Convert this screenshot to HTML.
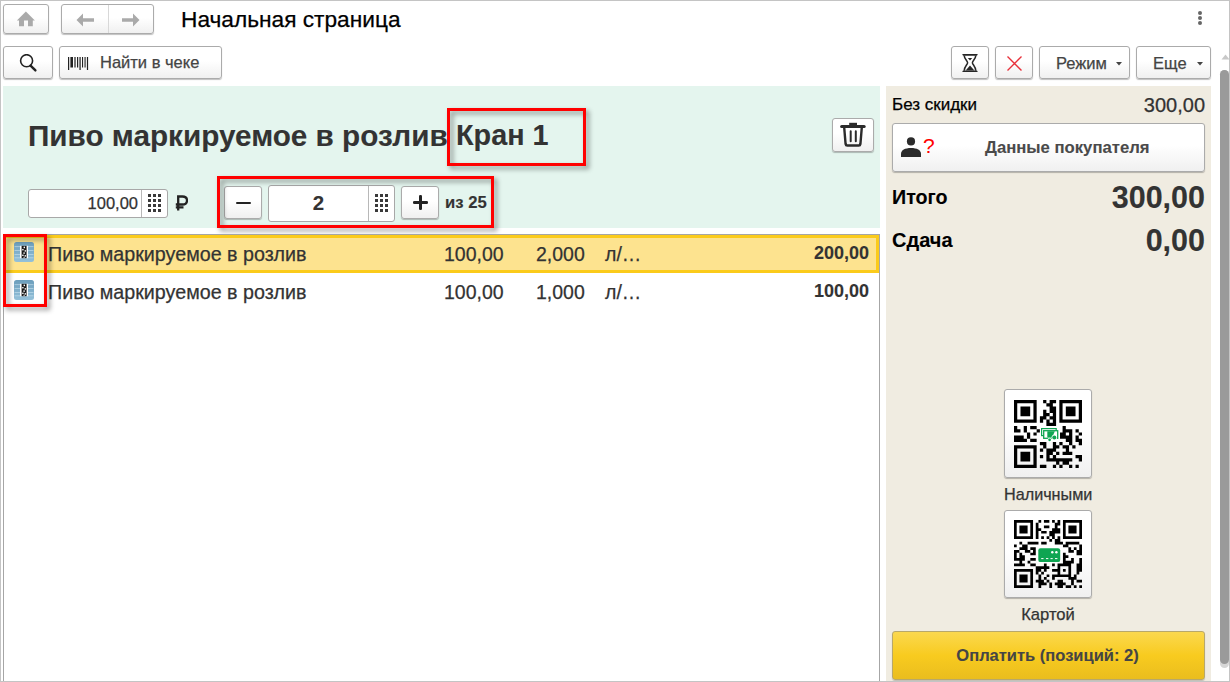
<!DOCTYPE html>
<html><head><meta charset="utf-8">
<style>
*{box-sizing:border-box;margin:0;padding:0}
html,body{width:1230px;height:682px;overflow:hidden;background:#fff;font-family:"Liberation Sans",sans-serif;color:#333}
.a{position:absolute}
.btn{position:absolute;border:1px solid #ababab;border-radius:3px;background:linear-gradient(#fff 0%,#fff 45%,#f0f0f0 100%);box-shadow:0 1px 1px rgba(0,0,0,.25)}
.t{position:absolute;white-space:nowrap;line-height:1;-webkit-text-stroke:0.25px currentColor}
.t[style*="bold"]{-webkit-text-stroke:0.1px currentColor}
.red{position:absolute;border:3px solid #f00;filter:drop-shadow(3px 3px 2.5px rgba(0,0,0,.42))}
.fld{position:absolute;border:1px solid #a8a8a8;border-radius:3px;background:#fff}
.kp{position:absolute;width:13px;height:18px;background-image:radial-gradient(#3a3a3a 0,#3a3a3a 0);}
</style></head><body>
<!-- window border -->
<div class="a" style="left:0;top:0;width:1230px;height:682px;border:1px solid #c4c4c4;z-index:10"></div>

<!-- top toolbar -->
<div class="btn" style="left:3px;top:4px;width:46px;height:30px">
  <svg class="a" style="left:0;top:0" width="44" height="28" viewBox="0 0 44 28"><path d="M12.9 15.4 L21.9 6.6 L30.9 15.4 Z" fill="#aaa"/><path d="M15 15 H20 V21.2 H15 Z M24 15 H28.8 V21.2 H24 Z" fill="#aaa"/></svg>
</div>
<div class="btn" style="left:61px;top:4px;width:93px;height:30px">
  <div class="a" style="left:46px;top:0;width:1px;height:28px;background:#d8d8d8"></div>
  <svg class="a" style="left:14px;top:8px" width="19" height="14" viewBox="0 0 19 14"><path d="M0.5 7 L7 0.5 V5.3 H18 V8.7 H7 V13.5 Z" fill="#aaa"/></svg>
  <svg class="a" style="left:59px;top:8px" width="19" height="14" viewBox="0 0 19 14"><path d="M18.5 7 L12 0.5 V5.3 H1 V8.7 H12 V13.5 Z" fill="#aaa"/></svg>
</div>
<div class="t" style="left:181px;top:8px;font-size:22.7px;color:#000">Начальная страница</div>
<div class="a" style="left:1198px;top:11px;width:4px;height:4px;border-radius:2px;background:#666"></div>
<div class="a" style="left:1198px;top:16px;width:4px;height:4px;border-radius:2px;background:#666"></div>
<div class="a" style="left:1198px;top:21px;width:4px;height:4px;border-radius:2px;background:#666"></div>

<!-- second toolbar -->
<div class="btn" style="left:3px;top:46px;width:50px;height:33px">
  <svg class="a" style="left:15px;top:7px" width="20" height="20" viewBox="0 0 20 20"><circle cx="7.6" cy="6.7" r="6" fill="none" stroke="#222" stroke-width="1.6"/><path d="M11.6 11.6 L16.4 16.4" stroke="#222" stroke-width="2.4" stroke-linecap="round"/></svg>
</div>
<div class="btn" style="left:59px;top:46px;width:163px;height:33px">
  <svg class="a" style="left:7px;top:9px" width="22" height="15" viewBox="0 0 22 15"><g fill="#222"><rect x="1" y="1" width="1.2" height="13"/><rect x="3.4" y="1" width="2.6" height="10.5"/><rect x="7" y="1" width="2" height="10.5" fill="#777"/><rect x="10" y="1" width="1.2" height="10.5"/><rect x="12.2" y="1" width="1.8" height="13" fill="#666"/><rect x="15" y="1" width="1.1" height="10.5"/><rect x="17.2" y="1" width="1.8" height="10.5" fill="#777"/><rect x="19.9" y="1" width="1.2" height="13"/></g></svg>
  <div class="t" style="left:40px;top:7px;font-size:16.5px;color:#444">Найти в чеке</div>
</div>
<div class="btn" style="left:951px;top:46px;width:38px;height:33px">
  <svg class="a" style="left:10px;top:7px" width="17" height="19" viewBox="0 0 17 19"><path d="M0.2 0 H15.8 L15 1.8 H1 Z M1 16.4 H15 L15.8 18.1 H0.2 Z" fill="#262626"/><path d="M2.2 1.6 C2.4 5 5.6 7 5.6 8.7 C5.6 10.4 2.4 12.4 2.2 16.6 M13.8 1.6 C13.6 5 10.4 7 10.4 8.7 C10.4 10.4 13.6 12.4 13.8 16.6" fill="none" stroke="#262626" stroke-width="1.5"/><path d="M5.8 3.9 H10.2 L8 6.4 Z" fill="#262626"/><path d="M3.6 16.6 L8 11.4 L12.4 16.6 Z" fill="#262626"/></svg>
</div>
<div class="btn" style="left:995px;top:46px;width:38px;height:33px">
  <svg class="a" style="left:10px;top:8px" width="17" height="17" viewBox="0 0 17 17"><path d="M1.5 1.5 L15.5 15.5 M15.5 1.5 L1.5 15.5" stroke="#e8303a" stroke-width="1.4"/></svg>
</div>
<div class="btn" style="left:1039px;top:46px;width:91px;height:33px">
  <div class="t" style="left:16px;top:8px;font-size:16.5px;color:#444">Режим</div>
  <svg class="a" style="left:76px;top:15px" width="6" height="4" viewBox="0 0 6 4"><path d="M0 0 H6 L3 3.5 Z" fill="#444"/></svg>
</div>
<div class="btn" style="left:1136px;top:46px;width:75px;height:33px">
  <div class="t" style="left:16px;top:8px;font-size:16.5px;color:#444">Еще</div>
  <svg class="a" style="left:60px;top:15px" width="6" height="4" viewBox="0 0 6 4"><path d="M0 0 H6 L3 3.5 Z" fill="#444"/></svg>
</div>

<!-- scrollbar -->
<svg class="a" style="left:1221px;top:54px" width="9" height="6" viewBox="0 0 9 6"><path d="M0.5 5.5 L4.5 0.5 L8.5 5.5 Z" fill="#c8c8c8"/></svg>
<div class="a" style="left:1220px;top:70px;width:9px;height:598px;border-radius:5px;background:#d6d6d6"></div>
<div class="a" style="left:1220px;top:70px;width:9px;height:594px;border-radius:5px;background:#9a9a9a"></div>

<!-- green header -->
<div class="a" style="left:3px;top:86px;width:877px;height:142px;background:#e4f5ee"></div>
<div class="t" style="left:28px;top:121px;font-size:29.7px;font-weight:bold;color:#333">Пиво маркируемое в розлив</div>
<div class="t" id="kran" style="left:456px;top:121px;font-size:28.8px;font-weight:bold;color:#333">Кран 1</div>
<div class="btn" style="left:832px;top:118px;width:42px;height:34px">
  <svg class="a" style="left:0;top:0" width="40" height="32" viewBox="0 0 40 32"><path d="M16.2 5 H24" stroke="#2b2b2b" stroke-width="2.4"/><path d="M8.6 7.6 H31.2" stroke="#2b2b2b" stroke-width="3" stroke-linecap="round"/><path d="M11.2 8.5 L12.6 25 Q12.8 26.5 14.3 26.5 H25.7 Q27.2 26.5 27.4 25 L28.8 8.5" fill="none" stroke="#2b2b2b" stroke-width="2.4"/><path d="M17.7 12.2 V22.3 M22.8 12.2 V22.3" stroke="#2b2b2b" stroke-width="2" stroke-linecap="round"/></svg>
</div>

<!-- price field -->
<div class="fld" style="left:28px;top:189px;width:140px;height:29px">
  <div class="a" style="left:112px;top:0;width:1px;height:27px;background:#b8b8b8"></div>
  <div class="t" style="left:0;top:5px;width:109px;text-align:right;font-size:16.5px;color:#333">100,00</div>
  <svg class="a" style="left:119px;top:4px" width="14" height="19" viewBox="0 0 14 19"><g fill="#3a3a3a"><rect x="0" y="0" width="3" height="3"/><rect x="5" y="0" width="3" height="3"/><rect x="10" y="0" width="3" height="3"/><rect x="0" y="5" width="3" height="3"/><rect x="5" y="5" width="3" height="3"/><rect x="10" y="5" width="3" height="3"/><rect x="0" y="10" width="3" height="3"/><rect x="5" y="10" width="3" height="3"/><rect x="10" y="10" width="3" height="3"/><rect x="0" y="15" width="3" height="3"/><rect x="5" y="15" width="3" height="3"/><rect x="10" y="15" width="3" height="3"/></g></svg>
</div>
<svg class="a" style="left:175px;top:195px" width="13" height="16" viewBox="0 0 13 16"><path d="M3.2 15.5 V1.5 H7.5 C10.5 1.5 12 3.2 12 5.5 C12 7.8 10.5 9.5 7.5 9.5 H0.8 M0.8 12.3 H8.5" fill="none" stroke="#222" stroke-width="2.3"/></svg>

<!-- quantity -->
<div class="btn" style="left:224px;top:186px;width:38px;height:33px">
  <div class="a" style="left:11px;top:14.6px;width:15px;height:2.6px;border-radius:1.3px;background:#222"></div>
</div>
<div class="fld" style="left:268px;top:185px;width:127px;height:37px">
  <div class="a" style="left:99px;top:0;width:1px;height:35px;background:#b8b8b8"></div>
  <div class="t" style="left:0;top:7px;width:99px;text-align:center;font-size:20.5px;font-weight:bold;color:#333">2</div>
  <svg class="a" style="left:106px;top:8px" width="14" height="19" viewBox="0 0 14 19"><g fill="#3a3a3a"><rect x="0" y="0" width="3" height="3"/><rect x="5" y="0" width="3" height="3"/><rect x="10" y="0" width="3" height="3"/><rect x="0" y="5" width="3" height="3"/><rect x="5" y="5" width="3" height="3"/><rect x="10" y="5" width="3" height="3"/><rect x="0" y="10" width="3" height="3"/><rect x="5" y="10" width="3" height="3"/><rect x="10" y="10" width="3" height="3"/><rect x="0" y="15" width="3" height="3"/><rect x="5" y="15" width="3" height="3"/><rect x="10" y="15" width="3" height="3"/></g></svg>
</div>
<div class="btn" style="left:401px;top:186px;width:38px;height:33px">
  <div class="a" style="left:10.5px;top:14.2px;width:15.5px;height:2.6px;border-radius:1.3px;background:#222"></div>
  <div class="a" style="left:17px;top:8px;width:2.6px;height:15px;border-radius:1.3px;background:#222"></div>
</div>
<div class="t" style="left:445px;top:195px;font-size:16.7px;font-weight:bold;color:#333">из 25</div>

<div class="red" style="left:447px;top:108px;width:139px;height:58px"></div>
<div class="red" style="left:217px;top:176px;width:277px;height:52px"></div>

<!-- table -->
<div class="a" style="left:3px;top:234px;width:877px;height:448px;border:1px solid #a6a6a6;border-bottom:none;background:#fff"></div>
<div class="a" style="left:4px;top:235px;width:875px;height:38px;background:#fde38f;border:3px solid #fbcb1b;border-left:none"></div>
<!-- rows -->
<div class="t" style="left:48px;top:245px;font-size:19.7px;color:#333">Пиво маркируемое в розлив</div>
<div class="t" style="left:444px;top:245px;font-size:19.5px;color:#333">100,00</div>
<div class="t" style="left:536px;top:245px;font-size:19.5px;color:#333">2,000</div>
<div class="t" style="left:605px;top:245px;font-size:19.5px;color:#333">л/…</div>
<div class="t" style="left:700px;top:244px;width:169px;text-align:right;font-size:18px;font-weight:bold;color:#333">200,00</div>

<div class="t" style="left:48px;top:283px;font-size:19.7px;color:#333">Пиво маркируемое в розлив</div>
<div class="t" style="left:444px;top:283px;font-size:19.5px;color:#333">100,00</div>
<div class="t" style="left:536px;top:283px;font-size:19.5px;color:#333">1,000</div>
<div class="t" style="left:605px;top:283px;font-size:19.5px;color:#333">л/…</div>
<div class="t" style="left:700px;top:282px;width:169px;text-align:right;font-size:18px;font-weight:bold;color:#333">100,00</div>

<!-- item icons -->
<svg class="a" style="left:14px;top:242px" width="20" height="20" viewBox="0 0 20 20"><defs><linearGradient id="ig1" x1="0" y1="0" x2="0" y2="1"><stop offset="0" stop-color="#6c9ebc"/><stop offset="1" stop-color="#94c1da"/></linearGradient></defs><rect x="0" y="0" width="20" height="20" rx="2.5" fill="url(#ig1)"/><path d="M0.5 4.6H19.5 M0.5 8.5H19.5 M0.5 12.5H19.5 M0.5 15.8H19.5" stroke="#cfe6f2" stroke-width="0.7" opacity=".8"/><rect x="6" y="3.8" width="8" height="12.4" fill="#fff"/><rect x="7.6" y="3.8" width="5" height="12.4" fill="#1a1a1a"/><g fill="#fff"><rect x="9.6" y="4.6" width="1.4" height="1.6"/><rect x="8.2" y="7" width="1.4" height="1.4"/><rect x="10.6" y="8.2" width="1.4" height="1.4"/><rect x="9.4" y="10.4" width="1.4" height="1.4"/><rect x="8.2" y="12.6" width="1.4" height="1.4"/><rect x="10.6" y="13.2" width="1.4" height="1.4"/><rect x="9.5" y="14.8" width="1.2" height="1"/></g></svg>
<svg class="a" style="left:14px;top:280px" width="20" height="20" viewBox="0 0 20 20"><defs><linearGradient id="ig2" x1="0" y1="0" x2="0" y2="1"><stop offset="0" stop-color="#6c9ebc"/><stop offset="1" stop-color="#94c1da"/></linearGradient></defs><rect x="0" y="0" width="20" height="20" rx="2.5" fill="url(#ig2)"/><path d="M0.5 4.6H19.5 M0.5 8.5H19.5 M0.5 12.5H19.5 M0.5 15.8H19.5" stroke="#cfe6f2" stroke-width="0.7" opacity=".8"/><rect x="6" y="3.8" width="8" height="12.4" fill="#fff"/><rect x="7.6" y="3.8" width="5" height="12.4" fill="#1a1a1a"/><g fill="#fff"><rect x="9.6" y="4.6" width="1.4" height="1.6"/><rect x="8.2" y="7" width="1.4" height="1.4"/><rect x="10.6" y="8.2" width="1.4" height="1.4"/><rect x="9.4" y="10.4" width="1.4" height="1.4"/><rect x="8.2" y="12.6" width="1.4" height="1.4"/><rect x="10.6" y="13.2" width="1.4" height="1.4"/><rect x="9.5" y="14.8" width="1.2" height="1"/></g></svg>
<div class="red" style="left:3px;top:234px;width:44px;height:73px"></div>

<!-- right panel -->
<div class="a" style="left:886px;top:86px;width:325px;height:596px;background:#f0ece1"></div>
<div class="t" style="left:892px;top:96px;font-size:17px;color:#000">Без скидки</div>
<div class="t" style="left:1000px;top:95px;width:205px;text-align:right;font-size:20px;color:#333">300,00</div>
<div class="btn" style="left:892px;top:123px;width:313px;height:49px">
  <svg class="a" style="left:8px;top:12px" width="22" height="22" viewBox="0 0 22 22"><circle cx="10" cy="5.4" r="4.1" fill="#2b2b2b"/><path d="M0 21 V18 C0 14 4 12 10 12 C16 12 20 14 20 18 V21 Z" fill="#2b2b2b"/></svg>
  <div class="t" style="left:30px;top:11px;font-size:21px;color:#f00;-webkit-text-stroke:0">?</div>
  <div class="t" style="left:92px;top:16px;font-size:16.7px;font-weight:bold;color:#4a4a4a">Данные покупателя</div>
</div>
<div class="t" style="left:892px;top:188px;font-size:19.7px;font-weight:bold;color:#000">Итого</div>
<div class="t" style="left:1000px;top:182px;width:205px;text-align:right;font-size:30.5px;font-weight:bold;color:#333">300,00</div>
<div class="t" style="left:892px;top:230px;font-size:20px;font-weight:bold;color:#000">Сдача</div>
<div class="t" style="left:1000px;top:225px;width:205px;text-align:right;font-size:30.5px;font-weight:bold;color:#333">0,00</div>

<!-- QR buttons -->
<div class="btn" style="left:1004px;top:389px;width:88px;height:89px" id="qr1"><svg class="a" style="left:9px;top:10px" width="68" height="68" viewBox="0 0 68 68"><svg x="0" y="0" width="68" height="68" viewBox="0 0 21 21"><path d="M0 0h7v1h-7zM9 0h1v1h-1zM11 0h2v1h-2zM14 0h7v1h-7zM0 1h1v1h-1zM6 1h1v1h-1zM10 1h2v1h-2zM14 1h1v1h-1zM20 1h1v1h-1zM0 2h1v1h-1zM2 2h3v1h-3zM6 2h1v1h-1zM11 2h2v1h-2zM14 2h1v1h-1zM16 2h3v1h-3zM20 2h1v1h-1zM0 3h1v1h-1zM2 3h3v1h-3zM6 3h1v1h-1zM9 3h1v1h-1zM11 3h2v1h-2zM14 3h1v1h-1zM16 3h3v1h-3zM20 3h1v1h-1zM0 4h1v1h-1zM2 4h3v1h-3zM6 4h1v1h-1zM9 4h2v1h-2zM12 4h1v1h-1zM14 4h1v1h-1zM16 4h3v1h-3zM20 4h1v1h-1zM0 5h1v1h-1zM6 5h1v1h-1zM8 5h2v1h-2zM11 5h2v1h-2zM14 5h1v1h-1zM20 5h1v1h-1zM0 6h7v1h-7zM8 6h1v1h-1zM10 6h1v1h-1zM12 6h1v1h-1zM14 6h7v1h-7zM10 7h3v1h-3zM0 8h1v1h-1zM3 8h1v1h-1zM5 8h2v1h-2zM15 8h1v1h-1zM0 9h2v1h-2zM3 9h1v1h-1zM7 9h1v1h-1zM15 9h3v1h-3zM19 9h1v1h-1zM4 10h1v1h-1zM6 10h1v1h-1zM14 10h2v1h-2zM17 10h1v1h-1zM20 10h1v1h-1zM0 11h3v1h-3zM4 11h1v1h-1zM14 11h4v1h-4zM19 11h1v1h-1zM0 12h4v1h-4zM5 12h2v1h-2zM16 12h2v1h-2zM19 12h2v1h-2zM8 13h2v1h-2zM12 13h1v1h-1zM14 13h1v1h-1zM17 13h1v1h-1zM20 13h1v1h-1zM0 14h7v1h-7zM9 14h1v1h-1zM12 14h2v1h-2zM15 14h2v1h-2zM18 14h1v1h-1zM0 15h1v1h-1zM6 15h1v1h-1zM8 15h1v1h-1zM10 15h3v1h-3zM16 15h1v1h-1zM0 16h1v1h-1zM2 16h3v1h-3zM6 16h1v1h-1zM10 16h2v1h-2zM13 16h1v1h-1zM15 16h3v1h-3zM0 17h1v1h-1zM2 17h3v1h-3zM6 17h1v1h-1zM8 17h1v1h-1zM10 17h1v1h-1zM12 17h1v1h-1zM19 17h2v1h-2zM0 18h1v1h-1zM2 18h3v1h-3zM6 18h1v1h-1zM10 18h8v1h-8zM20 18h1v1h-1zM0 19h1v1h-1zM6 19h1v1h-1zM13 19h1v1h-1zM15 19h2v1h-2zM0 20h7v1h-7zM8 20h2v1h-2zM12 20h1v1h-1zM14 20h1v1h-1zM17 20h1v1h-1zM19 20h1v1h-1z" fill="#000"/></svg>
<rect x="26" y="27" width="20" height="15" fill="#fff"/>
<rect x="27.6" y="28.6" width="14.6" height="7" fill="none" stroke="#0ea552" stroke-width="1.2"/>
<rect x="29.7" y="30.7" width="14" height="7.6" fill="#fff" stroke="#0ea552" stroke-width="1.3"/>
<path d="M33.3 31.2 H40.8 L38.2 37.6 H33.3 Z" fill="#0ea552"/>
<circle cx="40.3" cy="37.4" r="2.7" fill="#fff"/><circle cx="40.3" cy="37.4" r="2" fill="#0ea552"/>
<circle cx="35.6" cy="39.8" r="2.1" fill="#fff"/><circle cx="35.6" cy="39.8" r="1.4" fill="#0ea552"/>
</svg></div>
<div class="t" style="left:1004px;top:486px;width:88px;text-align:center;font-size:16.2px;color:#333">Наличными</div>
<div class="btn" style="left:1004px;top:510px;width:88px;height:88px" id="qr2"><svg class="a" style="left:9px;top:9px" width="68" height="68" viewBox="0 0 68 68"><svg x="0" y="0" width="68" height="68" viewBox="0 0 25 25"><path d="M0 0h7v1h-7zM9 0h1v1h-1zM11 0h2v1h-2zM14 0h1v1h-1zM16 0h1v1h-1zM18 0h7v1h-7zM0 1h1v1h-1zM6 1h1v1h-1zM8 1h1v1h-1zM15 1h2v1h-2zM18 1h1v1h-1zM24 1h1v1h-1zM0 2h1v1h-1zM2 2h3v1h-3zM6 2h1v1h-1zM8 2h1v1h-1zM11 2h2v1h-2zM15 2h1v1h-1zM18 2h1v1h-1zM20 2h3v1h-3zM24 2h1v1h-1zM0 3h1v1h-1zM2 3h3v1h-3zM6 3h1v1h-1zM8 3h2v1h-2zM14 3h3v1h-3zM18 3h1v1h-1zM20 3h3v1h-3zM24 3h1v1h-1zM0 4h1v1h-1zM2 4h3v1h-3zM6 4h1v1h-1zM8 4h1v1h-1zM10 4h2v1h-2zM13 4h4v1h-4zM18 4h1v1h-1zM20 4h3v1h-3zM24 4h1v1h-1zM0 5h1v1h-1zM6 5h1v1h-1zM8 5h1v1h-1zM13 5h2v1h-2zM18 5h1v1h-1zM24 5h1v1h-1zM0 6h7v1h-7zM8 6h1v1h-1zM10 6h1v1h-1zM12 6h1v1h-1zM14 6h1v1h-1zM16 6h1v1h-1zM18 6h7v1h-7zM13 7h1v1h-1zM15 7h2v1h-2zM2 8h1v1h-1zM5 8h4v1h-4zM10 8h2v1h-2zM15 8h3v1h-3zM19 8h5v1h-5zM0 9h1v1h-1zM3 9h2v1h-2zM18 9h2v1h-2zM24 9h1v1h-1zM2 10h3v1h-3zM6 10h2v1h-2zM20 10h1v1h-1zM22 10h1v1h-1zM24 10h1v1h-1zM0 11h2v1h-2zM4 11h2v1h-2zM7 11h1v1h-1zM20 11h2v1h-2zM23 11h2v1h-2zM0 12h1v1h-1zM2 12h1v1h-1zM6 12h2v1h-2zM18 12h1v1h-1zM23 12h2v1h-2zM0 13h1v1h-1zM2 13h2v1h-2zM18 13h2v1h-2zM0 14h4v1h-4zM6 14h2v1h-2zM18 14h1v1h-1zM21 14h1v1h-1zM24 14h1v1h-1zM2 15h1v1h-1zM5 15h1v1h-1zM18 15h4v1h-4zM24 15h1v1h-1zM0 16h4v1h-4zM6 16h2v1h-2zM11 16h1v1h-1zM14 16h1v1h-1zM16 16h5v1h-5zM23 16h2v1h-2zM8 17h5v1h-5zM16 17h1v1h-1zM20 17h1v1h-1zM23 17h2v1h-2zM0 18h7v1h-7zM8 18h2v1h-2zM11 18h1v1h-1zM14 18h3v1h-3zM18 18h1v1h-1zM20 18h1v1h-1zM23 18h2v1h-2zM0 19h1v1h-1zM6 19h1v1h-1zM8 19h1v1h-1zM10 19h1v1h-1zM16 19h1v1h-1zM20 19h1v1h-1zM23 19h1v1h-1zM0 20h1v1h-1zM2 20h3v1h-3zM6 20h1v1h-1zM9 20h1v1h-1zM12 20h1v1h-1zM14 20h7v1h-7zM22 20h1v1h-1zM0 21h1v1h-1zM2 21h3v1h-3zM6 21h1v1h-1zM9 21h1v1h-1zM11 21h1v1h-1zM14 21h1v1h-1zM20 21h3v1h-3zM0 22h1v1h-1zM2 22h3v1h-3zM6 22h1v1h-1zM8 22h3v1h-3zM12 22h1v1h-1zM16 22h2v1h-2zM21 22h1v1h-1zM23 22h2v1h-2zM0 23h1v1h-1zM6 23h1v1h-1zM9 23h3v1h-3zM13 23h1v1h-1zM15 23h4v1h-4zM21 23h1v1h-1zM0 24h7v1h-7zM9 24h1v1h-1zM13 24h1v1h-1zM16 24h2v1h-2zM19 24h2v1h-2zM22 24h1v1h-1zM24 24h1v1h-1z" fill="#000"/></svg>
<rect x="23" y="27" width="24.5" height="16" fill="#fff"/>
<rect x="24.3" y="28.3" width="21.9" height="13.8" rx="2.2" fill="#0ea552"/>
<circle cx="38.3" cy="32.3" r="1.2" fill="#fff"/><circle cx="42.4" cy="32.3" r="1.2" fill="#fff"/>
<path d="M27.2 38.6 H29.5 M32 38.6 H34.3 M36.5 38.6 H38.7 M41 38.6 H43.4" stroke="#fff" stroke-width="1"/>
</svg></div>
<div class="t" style="left:1004px;top:607px;width:88px;text-align:center;font-size:16.6px;color:#333">Картой</div>

<div class="a" style="left:892px;top:631px;width:313px;height:49px;border:1px solid #b8a86a;border-radius:3px;background:linear-gradient(#fbd84f,#f8cb1f 50%,#eabd1e);box-shadow:0 1px 1px rgba(0,0,0,.2)">
  <div class="t" style="left:-1px;top:15px;width:311px;text-align:center;font-size:16.5px;font-weight:bold;color:#454545">Оплатить (позиций: 2)</div>
</div>

</body></html>
